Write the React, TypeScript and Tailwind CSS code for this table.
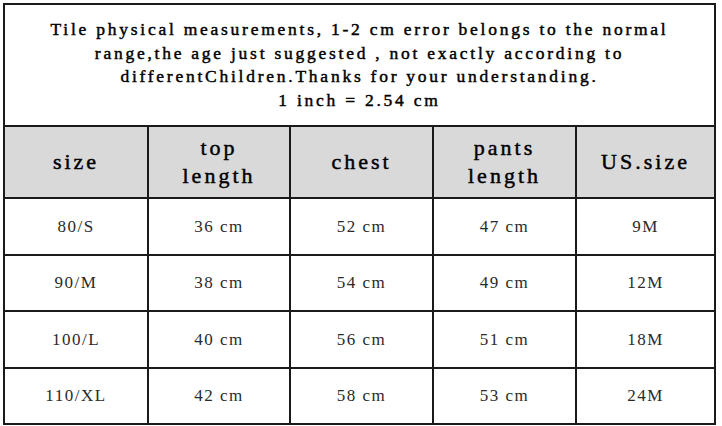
const rows = [
  ["80/S", "36 cm", "52 cm", "47 cm", "9M"],
  ["90/M", "38 cm", "54 cm", "49 cm", "12M"],
  ["100/L", "40 cm", "56 cm", "51 cm", "18M"],
  ["110/XL", "42 cm", "58 cm", "53 cm", "24M"],
];

const cols = "grid grid-cols-[144px_142px_143px_143px_1fr]";

export default function App() {
  return (
    <div className="w-[722px] h-[426px] bg-white pl-[3px] pt-[3px] font-['Liberation_Serif','Noto_Sans_CJK_SC',serif] text-[#111]">
      <div className="w-[713px] border-l-2 border-t-2 border-[#1a1a1a]">
        {/* note */}
        <div className="h-[122px] border-r-2 border-b-2 border-[#1a1a1a] flex flex-col items-center justify-center text-center text-[17.5px] leading-[23.5px] tracking-[2.75px] text-black [-webkit-text-stroke:0.45px_#000]">
          <p>Tile physical measurements, 1-2 cm error belongs to the normal</p>
          <p>range,the age just suggested , not exactly according to</p>
          <p>differentChildren.Thanks for your understanding.</p>
          <p>1 inch = 2.54 cm</p>
        </div>

        {/* header */}
        <div className={`${cols} h-[72px] bg-[#d9d9d9] text-[22px] leading-[28px] tracking-[3px] text-black [-webkit-text-stroke:0.45px_#000]`}>
          <div className="border-r-2 border-b-2 border-[#1a1a1a] flex items-center justify-center">size</div>
          <div className="border-r-2 border-b-2 border-[#1a1a1a] flex flex-col items-center justify-center">
            <span>top</span>
            <span>length</span>
          </div>
          <div className="border-r-2 border-b-2 border-[#1a1a1a] flex items-center justify-center">chest</div>
          <div className="border-r-2 border-b-2 border-[#1a1a1a] flex flex-col items-center justify-center">
            <span>pants</span>
            <span>length</span>
          </div>
          <div className="border-r-2 border-b-2 border-[#1a1a1a] flex items-center justify-center">US.size</div>
        </div>

        {/* data */}
        {rows.map((r, i) => (
          <div key={i} className={`${cols} h-[56.5px] text-[17px] tracking-[1.5px] text-[#2a2a2a]`}>
            {r.map((c, j) => (
              <div key={j} className="border-r-2 border-b-2 border-[#1a1a1a] flex items-center justify-center">
                {c}
              </div>
            ))}
          </div>
        ))}
      </div>
    </div>
  );
}
